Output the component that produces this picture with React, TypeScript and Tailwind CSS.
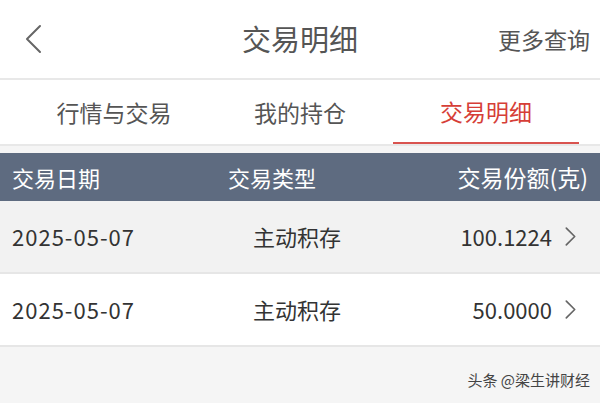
const font = { fontFamily: '"Noto Sans CJK SC", "Liberation Sans", sans-serif' };

const rows = [
  { date: '2025-05-07', type: '主动积存', amount: '100.1224', shade: true },
  { date: '2025-05-07', type: '主动积存', amount: '50.0000', shade: false },
];

function Chevron({ className }: { className?: string }) {
  return (
    <svg viewBox="0 0 12 20" className={className} fill="none" stroke="currentColor" strokeWidth="1.6" strokeLinecap="round" strokeLinejoin="round">
      <path d="M2 2 L10 10 L2 18" />
    </svg>
  );
}

export default function App() {
  return (
    <div className="w-[600px] h-[403px] bg-[#f5f5f5] overflow-hidden flex flex-col" style={font}>
      <div className="h-[78px] bg-white flex items-center px-[24px] relative">
        <svg viewBox="0 0 18 30" className="w-[18px] h-[30px] text-[#666]" fill="none" stroke="currentColor" strokeWidth="2" strokeLinecap="round" strokeLinejoin="round">
          <path d="M16 2 L3 15 L16 28" />
        </svg>
        <div className="absolute left-0 right-0 text-center text-[29px] text-[#555] pointer-events-none">交易明细</div>
        <div className="ml-auto mr-[-14px] text-[23px] text-[#555]">更多查询</div>
      </div>
      <div className="h-[2px] bg-[#e8e8e8]" />
      <div className="h-[66px] bg-white flex px-[21px] border-b-2 border-[#e8e8e8]">
        <div className="flex-1 flex items-center justify-center text-[23px] text-[#555]">行情与交易</div>
        <div className="flex-1 flex items-center justify-center text-[23px] text-[#555]">我的持仓</div>
        <div className="flex-1 flex flex-col items-center">
          <div className="flex-1 flex items-center text-[23px] text-[#d63e37]">交易明细</div>
          <div className="h-[2px] w-[186px] bg-[#d9534f]" />
        </div>
      </div>
      <div className="h-[7px]" />
      <div className="h-[48px] bg-[#5e6b80] flex items-center px-[12px] text-white text-[22px]">
        <div className="w-[216px]">交易日期</div>
        <div className="flex-1">交易类型</div>
        <div className="text-[23px]">交易份额(克)</div>
      </div>
      {rows.map((r, i) => (
        <div
          key={i}
          className={`h-[73px] flex items-center pl-[12px] pr-[23px] border-b-2 border-[#e6e6e6] text-[22px] text-[#333] ${r.shade ? 'bg-[#f2f2f2]' : 'bg-white'}`}
        >
          <div className="w-[241px] tracking-[1px]">{r.date}</div>
          <div className="flex-1">{r.type}</div>
          <div className="mr-[12px]">{r.amount}</div>
          <Chevron className="w-[13px] h-[21px] text-[#666]" />
        </div>
      ))}
      <div className="flex-1 flex items-end justify-end pr-[10px] pb-[12px]">
        <span className="text-[15px] text-[#444]">头条 @梁生讲财经</span>
      </div>
    </div>
  );
}
